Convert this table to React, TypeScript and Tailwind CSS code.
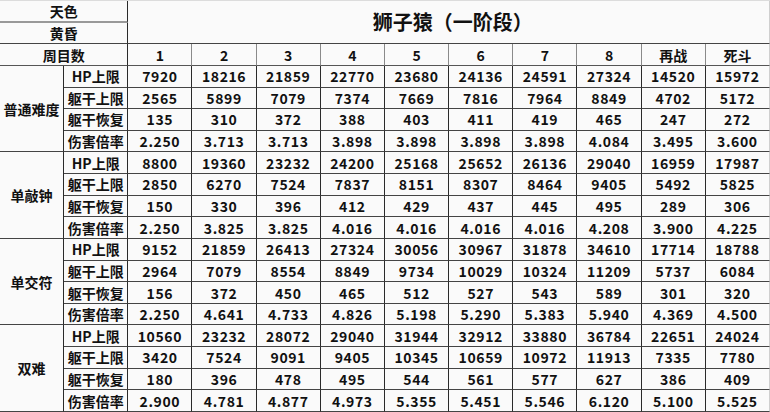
import React from 'react'

const COLS = ['1', '2', '3', '4', '5', '6', '7', '8', '再战', '死斗']
const ROW_LABELS = ['HP上限', '躯干上限', '躯干恢复', '伤害倍率']

const GROUPS = [
  {
    name: '普通难度',
    rows: [
      ['7920', '18216', '21859', '22770', '23680', '24136', '24591', '27324', '14520', '15972'],
      ['2565', '5899', '7079', '7374', '7669', '7816', '7964', '8849', '4702', '5172'],
      ['135', '310', '372', '388', '403', '411', '419', '465', '247', '272'],
      ['2.250', '3.713', '3.713', '3.898', '3.898', '3.898', '3.898', '4.084', '3.495', '3.600'],
    ],
  },
  {
    name: '单敲钟',
    rows: [
      ['8800', '19360', '23232', '24200', '25168', '25652', '26136', '29040', '16959', '17987'],
      ['2850', '6270', '7524', '7837', '8151', '8307', '8464', '9405', '5492', '5825'],
      ['150', '330', '396', '412', '429', '437', '445', '495', '289', '306'],
      ['2.250', '3.825', '3.825', '4.016', '4.016', '4.016', '4.016', '4.208', '3.900', '4.225'],
    ],
  },
  {
    name: '单交符',
    rows: [
      ['9152', '21859', '26413', '27324', '30056', '30967', '31878', '34610', '17714', '18788'],
      ['2964', '7079', '8554', '8849', '9734', '10029', '10324', '11209', '5737', '6084'],
      ['156', '372', '450', '465', '512', '527', '543', '589', '301', '320'],
      ['2.250', '4.641', '4.733', '4.826', '5.198', '5.290', '5.383', '5.940', '4.369', '4.500'],
    ],
  },
  {
    name: '双难',
    rows: [
      ['10560', '23232', '28072', '29040', '31944', '32912', '33880', '36784', '22651', '24024'],
      ['3420', '7524', '9091', '9405', '10345', '10659', '10972', '11913', '7335', '7780'],
      ['180', '396', '478', '495', '544', '561', '577', '627', '386', '409'],
      ['2.900', '4.781', '4.877', '4.973', '5.355', '5.451', '5.546', '6.120', '5.100', '5.525'],
    ],
  },
]

function Cell({ className = '', children }: { className?: string; children?: React.ReactNode }) {
  return (
    <div className={`flex items-center justify-center leading-none border-b border-r border-b-[#444] border-r-[#2a2a2a] ${className}`}>
      {children}
    </div>
  )
}

export default function App() {
  return (
    <div
      className="grid grid-cols-12 grid-rows-[repeat(19,minmax(0,1fr))] w-[770px] h-[412px] bg-[#fafafa] text-[#111] text-[14px] font-bold border-t border-t-[#dcdcdc] overflow-hidden"
      style={{ fontFamily: '"Noto Sans CJK SC", "Noto Sans", sans-serif' }}
    >
      {/* header block */}
      <Cell className="col-span-2 border-b-2 border-b-[#999]">天色</Cell>
      <Cell className="col-span-10 row-span-2 text-[20px] border-r-[#cfcfcf] border-b-[#2a2a2a]">
        <span className="pl-2">狮子猿（一阶段）</span>
      </Cell>
      <Cell className="col-span-2 border-b-[#2a2a2a]">黄昏</Cell>
      <Cell className="col-span-2 border-b-[#555]">周目数</Cell>
      {COLS.map((c, i) => (
        <Cell key={c} className={`border-b-[#555] ${i === COLS.length - 1 ? 'border-r-[#cfcfcf]' : 'border-r-[#8a8a8a]'}`}>
          {c}
        </Cell>
      ))}

      {/* data */}
      {GROUPS.map((g) => (
        <React.Fragment key={g.name}>
          <Cell className="row-span-4 border-b-[#2a2a2a]">{g.name}</Cell>
          {g.rows.map((row, ri) => (
            <React.Fragment key={ri}>
              <Cell className={ri === 3 ? 'border-b-[#2a2a2a]' : ''}>{ROW_LABELS[ri]}</Cell>
              {row.map((v, vi) => (
                <Cell
                  key={vi}
                  className={`tracking-[0.6px] ${ri === 3 ? 'border-b-[#2a2a2a]' : ''} ${vi === row.length - 1 ? 'border-r-[#cfcfcf]' : ''}`}
                >
                  {v}
                </Cell>
              ))}
            </React.Fragment>
          ))}
        </React.Fragment>
      ))}
    </div>
  )
}
